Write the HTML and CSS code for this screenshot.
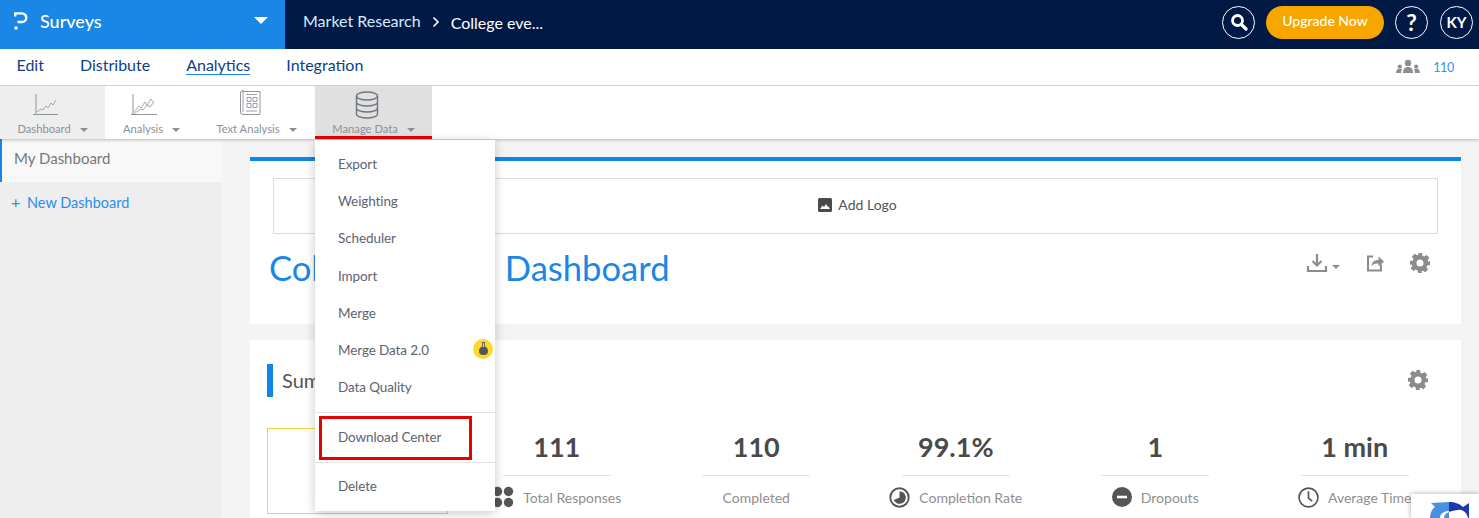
FILE: index.html
```html
<!DOCTYPE html>
<html lang="en">
<head>
    <meta charset="UTF-8">
    <title>Surveys - Analytics</title>
    <link rel="stylesheet" href="styles.css">
</head>
<body>
    <header class="topbar">
        <div class="brand">
            <svg class="brand-logo" viewBox="0 0 14 18"><path d="M1.200 4.500V1.400H8a4.300 4.300 0 0 1 0 8.600H3.500" fill="none" stroke="#fff" stroke-width="2.400"/><circle cx="2" cy="16" r="1.800" fill="#fff"/></svg>
            <span class="brand-name">Surveys</span>
            <span class="caret caret-white"></span>
        </div>
        <div class="crumbs">
            <span>Market Research</span>
            <svg class="crumb-sep" viewBox="0 0 8 12"><path d="M1.500 1.500 6 6l-4.500 4.500" fill="none" stroke="#fff" stroke-width="1.600"/></svg>
            <span class="crumb-current">College eve...</span>
        </div>
        <div class="top-actions">
            <div class="circle-btn">
                <svg width="18" height="18" viewBox="0 0 18 18"><circle cx="7.500" cy="7.500" r="5" fill="none" stroke="#fff" stroke-width="2.800"/><path d="m11.500 11.500 4.500 4.500" stroke="#fff" stroke-width="3.200" stroke-linecap="round"/></svg>
            </div>
            <div class="upgrade">Upgrade Now</div>
            <div class="circle-btn help">?</div>
            <div class="circle-btn initials">KY</div>
        </div>
    </header>

    <nav class="subnav">
        <a>Edit</a>
        <a>Distribute</a>
        <a class="active">Analytics</a>
        <a>Integration</a>
        <div class="respondents">
            <svg width="24" height="16" viewBox="0 0 24 16" fill="#8a8d93"><circle cx="12" cy="4" r="3.200"/><path d="M7 14c0-4 2-6 5-6s5 2 5 6z"/><circle cx="3.800" cy="7.500" r="2.100"/><path d="M0 14c0-3 1.500-4.500 3.800-4.500 1 0 1.700.3 2.200.7-.6 1-.9 2.300-.9 3.800z"/><circle cx="20.200" cy="7.500" r="2.100"/><path d="M24 14c0-3-1.500-4.500-3.800-4.500-1 0-1.700.3-2.200.7.600 1 .9 2.300.9 3.800z"/></svg>
            <span>110</span>
        </div>
    </nav>

    <div class="toolbar">
        <div class="tool tool-current">
            <svg width="26" height="24" viewBox="0 0 26 24" fill="none" stroke="#8f949b"><path d="M3 1v21M0 21.500h25"/><path d="M4 19l4-3 2 1 3-4 2 2 3-5 2 2 3-5" stroke-width=".8"/></svg>
            <div class="tool-label">Dashboard <span class="caret"></span></div>
        </div>
        <div class="tool tool-shift">
            <svg width="27" height="24" viewBox="0 0 27 24" fill="none" stroke="#8f949b"><path d="M2 1v21M0 21.500h26"/><path d="M3 19l5-6 2 2 4-6 2 3 4-6 3 4M3 21l6-5 3 1 4-5 3 2 4-5" stroke-width=".8"/></svg>
            <div class="tool-label">Analysis <span class="caret"></span></div>
        </div>
        <div class="tool tool-shift tool-text">
            <svg width="22" height="28" viewBox="0 0 22 28" fill="none" stroke="#8f949b"><path d="M4 2.500h17v23H4a2.500 2.500 0 0 1-2.500-2.500V4A2.500 2.500 0 0 1 4 1.500z"/><path d="M4 1.500V23M7 5.500h11M8 8.500h4v4H8zM14 8.500h4v4h-4zM8 14.500h4v4H8zM14 14.500h4v4h-4zM7 22h11" stroke-width=".9"/></svg>
            <div class="tool-label">Text Analysis <span class="caret"></span></div>
        </div>
        <div class="tool tool-open">
            <svg width="24" height="28" viewBox="0 0 24 28" fill="none" stroke="#6f757d" stroke-width="1.400"><ellipse cx="12" cy="5" rx="10.500" ry="4"/><path d="M1.500 5v18c0 2.200 4.700 4 10.500 4s10.500-1.800 10.500-4V5M1.500 11c0 2.200 4.700 4 10.500 4s10.500-1.800 10.500-4M1.500 17c0 2.200 4.700 4 10.500 4s10.500-1.800 10.500-4"/></svg>
            <div class="tool-label">Manage Data <span class="caret"></span></div>
        </div>
    </div>

    <div class="workspace">
        <aside class="sidebar">
            <div class="side-item">My Dashboard</div>
            <div class="side-new"><span class="plus">+</span> New Dashboard</div>
        </aside>

        <main class="content">
            <section class="card card-head">
                <div class="logo-box">
                    <svg width="14" height="14" viewBox="0 0 14 14"><path fill="#4a4a4a" d="M1.500 0h11A1.500 1.500 0 0 1 14 1.500v11a1.500 1.500 0 0 1-1.500 1.500h-11A1.500 1.500 0 0 1 0 12.500v-11A1.500 1.500 0 0 1 1.500 0z"/><path fill="#fff" d="m2 11 2.500-3.500 1.500 1.500 2-3 2 3 .5-.5 1.500 2.500z"/></svg>
                    <span>Add Logo</span>
                </div>
                <div class="head-row">
                    <h1>College Events Dashboard</h1>
                    <div class="head-icons">
                        <svg width="22" height="20" viewBox="0 0 22 20" fill="none" stroke="#8c8c8c" stroke-width="2.200"><path d="M11 1v11M6.500 8l4.500 4.500L15.500 8M2 13v5h18v-5"/></svg>
                        <span class="caret caret-small"></span>
                        <svg class="share" width="18" height="18" viewBox="0 0 18 18" fill="none"><path d="M7 2.500H2v14h13v-6" stroke="#8c8c8c" stroke-width="2"/><path d="M5.500 12c.5-4 3-6 7-6V2.500L18 7.500l-5.500 5V9.500c-3 0-5.500.5-7 2.500z" fill="#8c8c8c"/></svg>
                        <svg class="gear" width="20" height="20" viewBox="0 0 20 20"><path fill="#8c8c8c" fill-rule="evenodd" d="M8 0h4l.5 2.800 1.600.7 2.400-1.600 2.800 2.800-1.600 2.400.7 1.600L20 8v4l-2.800.5-.7 1.600 1.600 2.400-2.800 2.800-2.400-1.600-1.600.7L12 20H8l-.5-2.800-1.600-.7-2.400 1.600L.7 15.300l1.600-2.400-.7-1.600L0 12V8l2.800-.5.7-1.600L1.900 3.500 4.700.7l2.400 1.600 1.600-.7zM10 6.500a3.500 3.500 0 1 0 0 7 3.500 3.500 0 0 0 0-7z"/></svg>
                    </div>
                </div>
            </section>

            <section class="card card-summary">
                <div class="summary-head">
                    <h2>Summary</h2>
                    <svg class="gear" width="20" height="20" viewBox="0 0 20 20"><path fill="#8c8c8c" fill-rule="evenodd" d="M8 0h4l.5 2.800 1.600.7 2.400-1.600 2.800 2.800-1.600 2.400.7 1.600L20 8v4l-2.800.5-.7 1.600 1.600 2.400-2.800 2.800-2.400-1.600-1.600.7L12 20H8l-.5-2.800-1.600-.7-2.400 1.600L.7 15.300l1.600-2.400-.7-1.600L0 12V8l2.800-.5.7-1.600L1.900 3.500 4.700.7l2.400 1.600 1.600-.7zM10 6.500a3.500 3.500 0 1 0 0 7 3.500 3.500 0 0 0 0-7z"/></svg>
                </div>
                <div class="stats">
                    <div class="nps-box"></div>
                    <div class="stat">
                        <div class="stat-value">111</div>
                        <div class="stat-label">
                            <svg width="22" height="22" viewBox="0 0 22 22" fill="#555"><circle cx="5.500" cy="5.500" r="4.700"/><circle cx="16.500" cy="5.500" r="4.700"/><circle cx="5.500" cy="16.500" r="4.700"/><circle cx="16.500" cy="16.500" r="4.700"/></svg>
                            <span>Total Responses</span>
                        </div>
                    </div>
                    <div class="stat">
                        <div class="stat-value">110</div>
                        <div class="stat-label"><span>Completed</span></div>
                    </div>
                    <div class="stat">
                        <div class="stat-value">99.1%</div>
                        <div class="stat-label">
                            <svg width="21" height="21" viewBox="0 0 20 20"><circle cx="10" cy="10" r="8.800" fill="none" stroke="#555" stroke-width="1.800"/><path fill="#555" d="M10 4a6 6 0 1 1-5.500 8.400L10 10z"/></svg>
                            <span>Completion Rate</span>
                        </div>
                    </div>
                    <div class="stat">
                        <div class="stat-value">1</div>
                        <div class="stat-label">
                            <svg width="20" height="20" viewBox="0 0 20 20"><circle cx="10" cy="10" r="10" fill="#555"/><path stroke="#fff" stroke-width="2.600" d="M5 10h10"/></svg>
                            <span>Dropouts</span>
                        </div>
                    </div>
                    <div class="stat">
                        <div class="stat-value">1 min</div>
                        <div class="stat-label">
                            <svg width="21" height="21" viewBox="0 0 20 20" fill="none" stroke="#555" stroke-width="1.600"><circle cx="10" cy="10" r="9"/><path d="M10 4v6.500l3.500 3"/></svg>
                            <span>Average Time</span>
                        </div>
                    </div>
                </div>
            </section>
        </main>
    </div>

    <!-- Manage Data menu, open over the page -->
    <div class="menu">
        <div class="menu-item">Export</div>
        <div class="menu-item">Weighting</div>
        <div class="menu-item">Scheduler</div>
        <div class="menu-item">Import</div>
        <div class="menu-item">Merge</div>
        <div class="menu-item">Merge Data 2.0
            <span class="flask">
                <svg width="9" height="13" viewBox="0 0 9 13"><path fill="#555" d="M3 0h3v4.500C7.800 5.300 9 7 9 9a4 4 0 0 1-4 4H4a4 4 0 0 1-4-4c0-2 1.200-3.700 3-4.500z"/><path fill="#fbd92f" d="M3.800 1h1.400v4.200H3.800z"/></svg>
            </span>
        </div>
        <div class="menu-item">Data Quality</div>
        <div class="menu-sep"></div>
        <div class="menu-item menu-marked">Download Center</div>
        <div class="menu-sep menu-sep-low"></div>
        <div class="menu-item menu-last">Delete</div>
    </div>

    <div class="recaptcha">
        <svg width="68" height="24" viewBox="0 0 68 24">
            <path fill="#4a90e2" d="M19 24C19 19 21 15 24 13L20 9 38 8V24H33C33 21 35 19 38 18V17C34 17 29 19 29 24z"/>
            <path fill="#1c3aa9" d="M38 8C44 8 49 10 52 13L58 9V24H57C56 19 52 15 47 16 44 16 41 17 38 18z"/>
        </svg>
    </div>
</body>
</html>
```

FILE: styles.css
```css
* {
    box-sizing: border-box;
}

html, body {
    height: 100%;
}

body {
    margin: 0;
    overflow: hidden;
    font-family: "Lato", "Noto Sans", sans-serif;
    background: #f4f4f4;
    color: #555;
}

.caret {
    display: inline-block;
    width: 0;
    height: 0;
    margin-left: 6px;
    vertical-align: middle;
    border-left: 4px solid transparent;
    border-right: 4px solid transparent;
    border-top: 4px solid #8a9099;
}

.caret-white {
    margin-left: auto;
    border-left-width: 7px;
    border-right-width: 7px;
    border-top: 7px solid #fff;
}

.caret-small {
    margin: 12px 0 0 4px;
}

/* top bar */
.topbar {
    display: flex;
    height: 49px;
    background: #001a45;
    color: #fff;
}

.brand {
    display: flex;
    align-items: center;
    width: 285px;
    padding: 0 17px 8px 14px;
    background: #1a87e6;
}

.brand-logo {
    width: 14px;
    height: 18px;
}

.brand-name {
    margin-left: 12px;
    font-size: 18px;
    font-weight: 500;
}

.crumbs {
    display: flex;
    align-items: center;
    padding: 0 0 8px 18px;
    font-size: 16px;
    color: #d5ecff;
}

.crumb-sep {
    width: 8px;
    height: 12px;
    margin: 2px 11px 0;
}

.crumb-current {
    color: #fff;
    margin-top: 4px;
}

.top-actions {
    display: flex;
    align-items: center;
    margin-left: auto;
    padding: 0 6px 5px 0;
    gap: 11px;
}

.circle-btn {
    display: flex;
    align-items: center;
    justify-content: center;
    width: 33px;
    height: 33px;
    border: 1px solid #fff;
    border-radius: 50%;
    font-weight: 700;
}

.help {
    font-size: 23px;
}

.initials {
    margin-left: 1px;
    font-size: 15px;
}

.upgrade {
    width: 118px;
    height: 33px;
    line-height: 30px;
    text-align: center;
    background: #f7a600;
    border-radius: 17px;
    font-size: 14px;
    font-weight: 500;
}

/* second row */
.subnav {
    display: flex;
    align-items: center;
    height: 37px;
    padding: 0 25px 5px 16.5px;
    background: #fff;
    border-bottom: 1px solid #ddd;
    font-size: 16px;
    color: #0e3f86;
    gap: 36px;
}

.subnav .active {
    border-bottom: 1px solid #1a87e6;
}

.respondents {
    display: flex;
    align-items: center;
    margin: 5px 0 0 auto;
    font-size: 12.5px;
    letter-spacing: -0.3px;
    color: #3a8eea;
    gap: 13px;
}

/* tool tabs */
.toolbar {
    position: relative;
    z-index: 2;
    display: flex;
    height: 53px;
    background: #fff;
    box-shadow: 0 1px 3px rgba(0, 0, 0, 0.25);
}

.tool {
    display: flex;
    flex-direction: column;
    align-items: center;
    justify-content: flex-end;
    width: 105px;
    padding-bottom: 3px;
}

.tool svg {
    margin: 0 14px 5px 0;
}

.tool-shift {
    padding-right: 12px;
}

.tool-current {
    background: #eee;
}

.tool-open {
    width: 117px;
    background: #e0e0e0;
    border-bottom: 3px solid #e60000;
    padding-bottom: 0;
}

.tool-open svg {
    margin-bottom: 3px;
}

.tool-label {
    font-size: 11.2px;
    line-height: 14px;
    color: #8a9099;
    white-space: nowrap;
}

/* page below the tabs */
.workspace {
    display: flex;
    height: 379px;
}

.sidebar {
    width: 222px;
    flex: none;
    background: #eee;
}

.side-item {
    height: 43px;
    line-height: 38px;
    padding-left: 12px;
    background: #f8f8f8;
    border-left: 2px solid #1a87e6;
    font-size: 15px;
    color: #777;
}

.side-new {
    padding: 10px 0 0 11px;
    font-size: 14.5px;
    color: #2a8dea;
}

.plus {
    margin-right: 3px;
    font-size: 16px;
}

.content {
    flex: 1;
    min-width: 0;
    padding: 18px 18px 0 28px;
}

.card {
    background: #fff;
}

.card-head {
    height: 167px;
    padding: 17px 23px 0;
    border-top: 4px solid #0f86e8;
}

.logo-box {
    display: flex;
    align-items: center;
    justify-content: center;
    height: 56px;
    padding: 0 0 3px 4px;
    border: 1px solid #ddd;
    font-size: 14px;
    color: #555;
    gap: 6px;
}

.head-row {
    display: flex;
    justify-content: space-between;
    padding-top: 13px;
}

h1 {
    margin: 0 0 0 -4px;
    font-size: 34.6px;
    word-spacing: 2px;
    line-height: 42px;
    font-weight: 400;
    color: #1a87e6;
}

.head-icons {
    display: flex;
    align-items: flex-start;
    padding: 6px 8px 0 0;
}

.share {
    margin: 1px 0 0 26px;
}

.head-icons .gear {
    margin-left: 26px;
}

.card-summary {
    margin-top: 16px;
    height: 180px;
    padding: 24px 0 0 17px;
}

.summary-head {
    display: flex;
    justify-content: space-between;
    height: 64px;
    padding-right: 33px;
}

.summary-head .gear {
    margin-top: 6px;
}

h2 {
    margin: 0;
    height: 33px;
    padding-left: 9px;
    border-left: 6px solid #0f86e8;
    font-size: 20px;
    line-height: 33px;
    font-weight: 400;
}

.stats {
    display: flex;
}

.nps-box {
    width: 181px;
    height: 86px;
    margin-right: 9px;
    border: 1px solid #f5d33b;
    flex: none;
}

.stat {
    display: flex;
    flex-direction: column;
    align-items: center;
    width: 199.5px;
    flex: none;
}

.stat-value {
    width: 108px;
    height: 48px;
    border-bottom: 1px solid #e3e3e3;
    text-align: center;
    font-size: 27px;
    line-height: 38px;
    font-weight: 700;
    color: #4a4a4a;
}

.stat-label {
    display: flex;
    align-items: center;
    justify-content: center;
    height: 22px;
    margin-top: 10px;
    font-size: 14px;
    color: #8f8f8f;
    gap: 9px;
    white-space: nowrap;
}

/* dropdown */
.menu {
    position: absolute;
    z-index: 3;
    left: 315px;
    top: 140px;
    width: 180px;
    height: 371px;
    padding-top: 6px;
    background: #fff;
    box-shadow: 0 2px 10px rgba(0, 0, 0, 0.22);
}

.menu-item {
    position: relative;
    height: 37.2px;
    line-height: 36px;
    padding-left: 23px;
    font-size: 13.5px;
    letter-spacing: -0.1px;
    color: #5d6470;
}

.menu-sep {
    height: 1px;
    margin-top: 6px;
    background: #e3e3e3;
}

.menu-sep-low {
    margin-top: 2px;
}

.menu-marked {
    height: 44px;
    margin: 3px 23px 0 4px;
    padding-left: 16px;
    line-height: 36px;
    border: 3px solid #e60000;
}

.menu-last {
    margin-top: 5px;
}

.flask {
    position: absolute;
    right: 2px;
    top: 7px;
    display: flex;
    align-items: center;
    justify-content: center;
    width: 20px;
    height: 20px;
    background: #fbd92f;
    border-radius: 50%;
}

/* recaptcha badge peeking in at the bottom corner */
.recaptcha {
    position: absolute;
    z-index: 4;
    left: 1411px;
    top: 494px;
    width: 68px;
    height: 24px;
    background: #fff;
    box-shadow: 0 0 5px rgba(0, 0, 0, 0.35);
}

.recaptcha svg {
    display: block;
}
```
